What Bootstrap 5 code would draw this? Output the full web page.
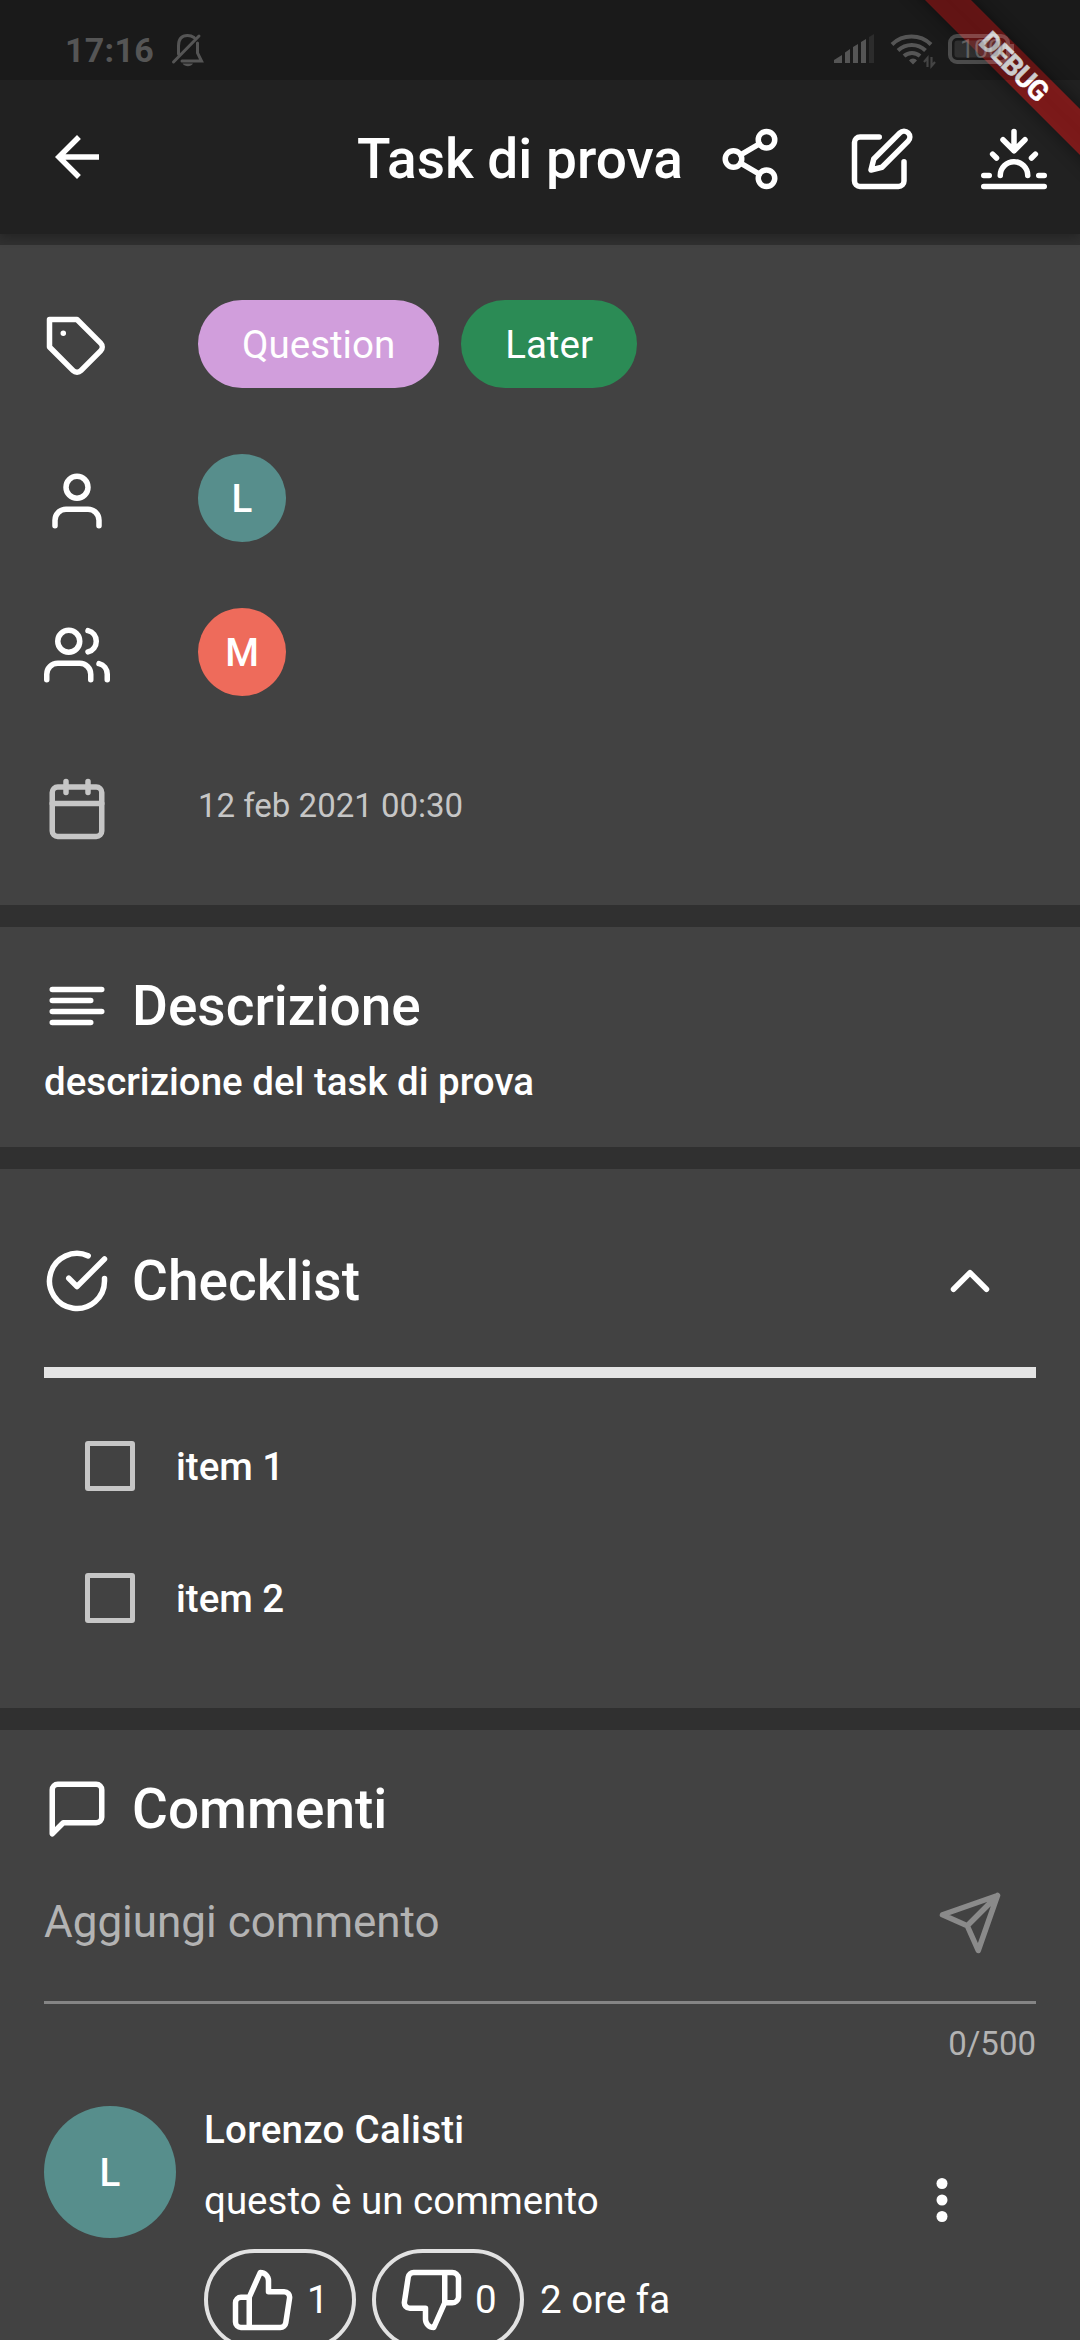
<!DOCTYPE html>
<html lang="it">
<head>
<meta charset="utf-8">
<meta name="viewport" content="width=device-width, initial-scale=1">
<title>Task di prova</title>
<link href="https://cdn.jsdelivr.net/npm/bootstrap@5.3.0/dist/css/bootstrap.min.css" rel="stylesheet">
<style>
  html, body { height: 2340px; overflow: hidden; }
  body { background: #303030; color: #fff; font-family: Roboto, "Liberation Sans", sans-serif; font-size: 38.5px; line-height: 45px; }
  .fi { width: 66px; height: 66px; flex: none; fill: none; stroke: currentColor; stroke-width: 2; stroke-linecap: round; stroke-linejoin: round; display: block; }
  .solid-icon { fill: currentColor; stroke: none; }
  .statusbar { height: 80px; background: rgba(0,0,0,.2); padding: 0 64px 0 65px; z-index: 3; }
  .topzone { background: #212121; height: 234px; box-shadow: 0 3px 10px rgba(0,0,0,.28); z-index: 2; }
  .clock { font-weight: 700; font-size: 34px; letter-spacing: .3px; color: #555; padding-top: 20px; line-height: 60px; }
  .bell { margin: 32px 0 0 16px; }
  .status-icons { margin-top: 30px; }
  .appbar { height: 154px; padding: 0 33px 0 44px; }
  .title-text { font-size: 55px; font-weight: 500; line-height: 64px; }
  .appbar .title-text { padding-top: 4px; }
  .actions { gap: 66px; margin-left: 34px; padding-top: 4px; }
  .panel { background: #424242; padding-left: 44px; padding-right: 44px; }
  .sections { padding-top: 11px; gap: 22px; }
  .details { padding-top: 22px; padding-bottom: 22px; }
  .detail-row { height: 154px; gap: 88px; }
  .detail-row > svg { margin-top: 5px; }
  .tags { gap: 22px; }
  .tag { height: 88px; padding: 0 44px; border-radius: 44px; }
  .lilac { background: #d19edc; }
  .green { background: #2b8b55; }
  .avatar { width: 88px; height: 88px; border-radius: 50%; font-weight: 500; flex: none; }
  .avatar-lg { width: 132px; height: 132px; }
  .teal { background: #578e8c; }
  .coral { background: #ee6b5b; }
  .dim { color: #c6c6c6; }
  .caption-text { font-size: 33px; }
  .dim .caption-text { padding-bottom: 2px; }
  .head { gap: 22px; height: 66px; }
  .medium { font-weight: 500; }
  .desc { height: 220px; padding-top: 46px; }
  .desc p { margin: 20px 0 0; }
  .checks { height: 539px; padding-top: 79px; }
  .chevron { margin-right: 33px; }
  .bar { height: 11px; background: #e4e4e4; margin-top: 53px; margin-bottom: 22px; }
  .check-item { height: 132px; padding-left: 41px; gap: 41px; }
  .box { width: 50px; height: 50px; border: 5.5px solid #c6c6c6; border-radius: 3px; background: transparent; margin: 0; appearance: none; }
  .comments { height: 610px; padding-top: 46px; }
  .entry { height: 159px; padding-right: 33px; }
  .entry .fi { color: #8a8a8a; margin-top: 3px; }
  .entry-line { height: 3px; background: #858585; }
  .hint { font-size: 44px; line-height: 52px; color: #b3b3b3; }
  .counter { color: #b3b3b3; margin-top: 17px; }
  .comment { gap: 28px; margin-top: 40px; }
  .author { margin-top: 1px; letter-spacing: .27px; }
  .message { margin-top: 26px; }
  .votes { gap: 16px; margin-top: 26px; }
  .vote { width: 152px; height: 101px; border: 4px solid #e2e2e2; border-radius: 51px; padding-left: 22px; gap: 11px; flex: none; }
  .more { margin: 61px 61px 0 0; }
  .ribbon { right: 0; top: 0; z-index: 2; pointer-events: none; }
</style>
</head>
<body>
<div class="position-relative topzone">
  <svg class="ribbon position-absolute" width="240" height="234" viewBox="0 0 240 234">
    <defs><filter id="soft" x="-30%" y="-30%" width="160%" height="160%"><feGaussianBlur stdDeviation="9"/></filter></defs>
    <path d="M65-20 111-20 280 148V195Z" fill="#000" opacity=".45" filter="url(#soft)"/>
    <path d="M85 0H131L240 109V155Z" fill="#b71c1c" fill-opacity=".63"/>
    <text transform="translate(174.500 66.500) rotate(45)" text-anchor="middle" y="10" font-size="28" font-weight="700" fill="#fff" stroke="#fff" stroke-width=".5" textLength="85">DEBUG</text>
  </svg>
  <div class="statusbar position-relative d-flex">
    <span class="clock">17:16</span>
    <svg class="bell" width="36" height="36" viewBox="0 0 36 36" fill="none" stroke="#555" stroke-width="3"><path d="M3.500 30 29 4M8.500 22V14C8.500 7 12 3.500 17.500 3.500 20 3.500 22 4 24 5.500M27.500 11V21L31.500 29H12" stroke-linecap="round"/><path d="M12.500 31.500H23C21 35 15 35 12.500 31.500Z" fill="#555" stroke="none"/></svg>
    <svg class="status-icons ms-auto" width="182" height="40" viewBox="0 0 182 40">
      <g fill="#555">
        <path d="M0 33V30L8 25V33ZM11 33V22.500L16 19V33ZM19 33V17L24 14V33ZM27 33V12L32 9V33Z"/>
        <path d="M35 33V7L40 4V33Z" fill="#2c2c2c"/>
        <path d="M75 30.500A5 5 0 0 1 83 30.500L79 34.500Z"/>
      </g>
      <path d="M58 14.500A28 28 0 0 1 97 14.500M64 20.500A20 20 0 0 1 91.500 20.500M70 26A12 12 0 0 1 86 26" fill="none" stroke="#555" stroke-width="4"/>
      <path d="M93.500 37V28L90 32M97.500 27V36L101 32" fill="none" stroke="#444" stroke-width="2.200"/>
      <g opacity=".3"><rect x="120.500" y="10.500" width="48" height="17" rx="3" fill="#666"/></g>
      <rect x="116" y="6" width="58" height="26" rx="7" fill="none" stroke="#fff" stroke-opacity=".22" stroke-width="4"/>
      <path d="M178 14V24" stroke="#fff" stroke-opacity=".22" stroke-width="4"/>
      <text x="126" y="28" font-size="25" fill="#fff" fill-opacity=".25">100</text>
    </svg>
  </div>
  <header class="appbar d-flex align-items-center">
    <svg class="fi solid-icon" viewBox="0 0 24 24"><path d="M20 11H7.830l5.590-5.590L12 4l-8 8 8 8 1.410-1.410L7.830 13H20v-2z"/></svg>
    <span class="title-text ms-auto">Task di prova</span>
    <div class="actions d-flex">
      <svg class="fi" viewBox="0 0 24 24"><circle cx="18" cy="5" r="3"/><circle cx="6" cy="12" r="3"/><circle cx="18" cy="19" r="3"/><path d="M8.590 13.510l6.830 3.980M15.410 6.510l-6.820 3.980"/></svg>
      <svg class="fi" viewBox="0 0 24 24"><path d="M11 4H4a2 2 0 0 0-2 2v14a2 2 0 0 0 2 2h14a2 2 0 0 0 2-2v-7"/><path d="M18.500 2.500a2.121 2.121 0 0 1 3 3L12 15l-4 1 1-4 9.500-9.500z"/></svg>
      <svg class="fi" viewBox="0 0 24 24"><path d="M17 18a5 5 0 0 0-10 0M12 9V2M4.220 10.220l1.420 1.420M1 18h2M21 18h2M18.360 11.640l1.420-1.420M23 22H1M16 5l-4 4-4-4"/></svg>
    </div>
  </header>
</div>
<main class="sections d-flex flex-column">
  <section class="panel details">
    <div class="detail-row d-flex align-items-center">
      <svg class="fi" viewBox="0 0 24 24"><path d="M20.590 13.410l-7.170 7.170a2 2 0 0 1-2.830 0L2 12V2h10l8.590 8.590a2 2 0 0 1 0 2.820zM7 7h.01"/></svg>
      <div class="tags d-flex">
        <span class="tag lilac d-flex align-items-center">Question</span>
        <span class="tag green d-flex align-items-center">Later</span>
      </div>
    </div>
    <div class="detail-row d-flex align-items-center">
      <svg class="fi" viewBox="0 0 24 24"><path d="M20 21v-2a4 4 0 0 0-4-4H8a4 4 0 0 0-4 4v2"/><circle cx="12" cy="7" r="4"/></svg>
      <span class="avatar teal d-flex align-items-center justify-content-center">L</span>
    </div>
    <div class="detail-row d-flex align-items-center">
      <svg class="fi" viewBox="0 0 24 24"><path d="M17 21v-2a4 4 0 0 0-4-4H5a4 4 0 0 0-4 4v2M23 21v-2a4 4 0 0 0-3-3.870M16 3.130a4 4 0 0 1 0 7.750"/><circle cx="9" cy="7" r="4"/></svg>
      <span class="avatar coral d-flex align-items-center justify-content-center">M</span>
    </div>
    <div class="detail-row d-flex align-items-center dim">
      <svg class="fi" viewBox="0 0 24 24"><rect x="3" y="4" width="18" height="18" rx="2"/><path d="M16 2v4M8 2v4M3 10h18"/></svg>
      <span class="caption-text">12 feb 2021 00:30</span>
    </div>
  </section>
  <section class="panel desc">
    <div class="head d-flex align-items-center">
      <svg class="fi" viewBox="0 0 24 24"><path d="M17 10H3M21 6H3M21 14H3M17 18H3"/></svg>
      <span class="title-text">Descrizione</span>
    </div>
    <p class="medium">descrizione del task di prova</p>
  </section>
  <section class="panel checks">
    <div class="head d-flex align-items-center">
      <svg class="fi" viewBox="0 0 24 24"><path d="M22 11.080V12a10 10 0 1 1-5.930-9.140M22 4L12 14.010l-3-3"/></svg>
      <span class="title-text">Checklist</span>
      <svg class="fi chevron ms-auto" viewBox="0 0 24 24"><path d="M18 15l-6-6-6 6"/></svg>
    </div>
    <div class="bar"></div>
    <label class="check-item d-flex align-items-center medium"><input type="checkbox" class="box">item 1</label>
    <label class="check-item d-flex align-items-center medium"><input type="checkbox" class="box">item 2</label>
  </section>
  <section class="panel comments">
    <div class="head d-flex align-items-center">
      <svg class="fi" viewBox="0 0 24 24"><path d="M21 15a2 2 0 0 1-2 2H7l-4 4V5a2 2 0 0 1 2-2h14a2 2 0 0 1 2 2z"/></svg>
      <span class="title-text">Commenti</span>
    </div>
    <div class="entry d-flex align-items-center">
      <span class="hint">Aggiungi commento</span>
      <svg class="fi ms-auto" viewBox="0 0 24 24"><path d="M22 2L11 13M22 2l-7 20-4-9-9-4 20-7z"/></svg>
    </div>
    <div class="entry-line"></div>
    <div class="caption-text counter text-end">0/500</div>
    <div class="comment d-flex">
      <span class="avatar avatar-lg teal d-flex align-items-center justify-content-center">L</span>
      <div class="flex-grow-1">
        <div class="medium author">Lorenzo Calisti</div>
        <div class="message">questo è un commento</div>
        <div class="votes d-flex align-items-center">
          <span class="vote d-flex align-items-center"><svg class="fi" viewBox="0 0 24 24"><path d="M14 9V5a3 3 0 0 0-3-3l-4 9v11h11.280a2 2 0 0 0 2-1.700l1.380-9a2 2 0 0 0-2-2.300zM7 22H4a2 2 0 0 1-2-2v-7a2 2 0 0 1 2-2h3"/></svg>1</span>
          <span class="vote d-flex align-items-center"><svg class="fi" viewBox="0 0 24 24"><path d="M10 15v4a3 3 0 0 0 3 3l4-9V2H5.720a2 2 0 0 0-2 1.700l-1.380 9a2 2 0 0 0 2 2.300zm7-13h2.670A2.310 2.310 0 0 1 22 4v7a2.310 2.310 0 0 1-2.330 2H17"/></svg>0</span>
          <span>2 ore fa</span>
        </div>
      </div>
      <svg class="fi solid-icon more" viewBox="0 0 24 24"><circle cx="12" cy="6" r="2"/><circle cx="12" cy="12" r="2"/><circle cx="12" cy="18" r="2"/></svg>
    </div>
  </section>
</main>
<script src="https://cdn.jsdelivr.net/npm/bootstrap@5.3.0/dist/js/bootstrap.bundle.min.js"></script>
</body>
</html>
